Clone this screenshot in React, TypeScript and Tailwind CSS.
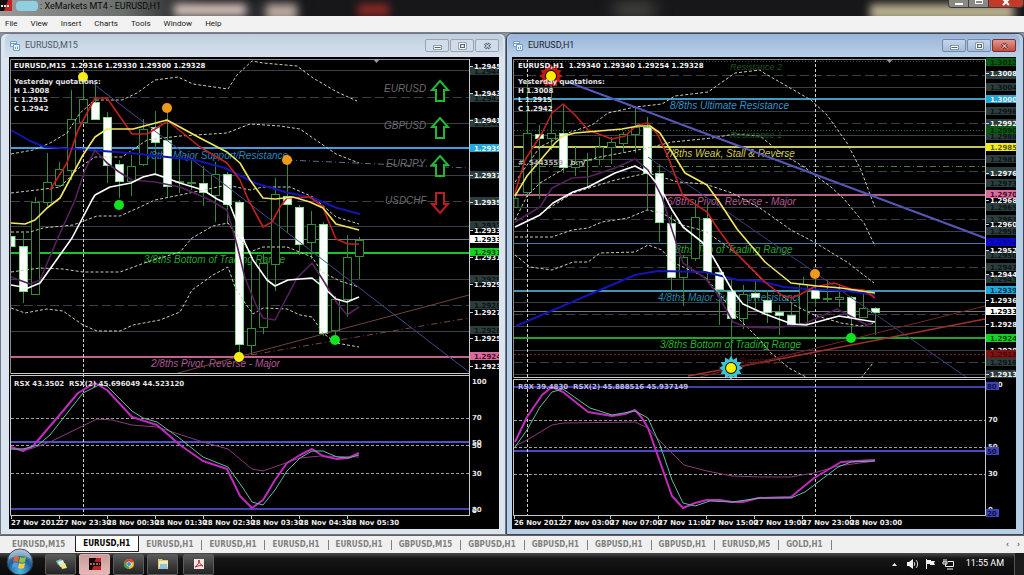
import { ReactNode } from "react";
import clsx from "clsx";

type Candle = [x: number, high: number, low: number, top: number, bottom: number, filled?: number];

type Level = {
  y: number;
  color: string;
  width?: number;
  dash?: string;
};

type Tag = {
  y: number;
  text: string;
  bg?: string;
  color?: string;
  width?: number;
};

type Note = {
  x: number;
  y: number;
  text: string;
  color: string;
};

type Curve = {
  points: string;
  color: string;
  width?: number;
  dash?: string;
};

type ChartProps = {
  title: string;
  left: number;
  right: number;
  axis: number;
  split: number;
  levels: Level[];
  candles: Candle[];
  curves: Curve[];
  verticals: number[];
  tags: Tag[];
  notes: Note[];
  header: Note[];
  dates: string[];
  arrowX: number;
  children?: ReactNode;
};

const GRID = "#3b3f48";
const DASH = "9 4";
const BAND = "3 2";
const SLATE = "#2c3d3d";
const BOLD = 1.6;

const leftLevels: Level[] = [
  { y: 70, color: GRID },
  { y: 97, color: GRID, dash: DASH },
  { y: 123, color: GRID },
  { y: 147, color: "#3f9fe0", width: 2 },
  { y: 175, color: GRID },
  { y: 201, color: GRID, dash: DASH },
  { y: 226, color: GRID },
  { y: 239, color: "#77718c" },
  { y: 252, color: "#19c32b", width: 2 },
  { y: 279, color: GRID },
  { y: 305, color: GRID, dash: DASH },
  { y: 331, color: GRID },
  { y: 356, color: "#c2648c", width: 2 },
  { y: 418, color: "#a0a0a0", dash: BAND },
  { y: 441, color: "#5151c8", width: 2 },
  { y: 445, color: "#a0a0a0", dash: BAND },
  { y: 473, color: "#a0a0a0", dash: BAND },
  { y: 508, color: "#4343b8", width: 2 },
];

const rightLevels: Level[] = [
  { y: 61, color: "#27502a", dash: "1 2" },
  { y: 75, color: GRID, dash: DASH },
  { y: 87, color: GRID },
  { y: 98, color: "#3f9cc0", width: 2 },
  { y: 111, color: GRID },
  { y: 123, color: GRID, dash: DASH },
  { y: 130, color: "#2b6a2b", dash: "1 2" },
  { y: 135, color: GRID },
  { y: 146, color: "#c8c460", width: 2 },
  { y: 159, color: GRID },
  { y: 166, color: "#4e8044", dash: "6 3 1 3" },
  { y: 171, color: GRID, dash: DASH },
  { y: 183, color: GRID },
  { y: 194, color: "#b06086", width: 2 },
  { y: 207, color: GRID },
  { y: 219, color: GRID, dash: DASH },
  { y: 231, color: GRID },
  { y: 243, color: "#3c7fae" },
  { y: 255, color: GRID },
  { y: 267, color: GRID, dash: DASH },
  { y: 279, color: GRID },
  { y: 290, color: "#4694b0", width: 2 },
  { y: 302, color: GRID },
  { y: 311, color: "#777a80" },
  { y: 314, color: GRID, dash: DASH },
  { y: 326, color: GRID },
  { y: 337, color: "#19a828", width: 2 },
  { y: 350, color: GRID },
  { y: 354, color: "#802020", dash: "2 2" },
  { y: 362, color: GRID, dash: DASH },
  { y: 374, color: GRID },
  { y: 386, color: "#3f3fae", width: 2 },
  { y: 420, color: "#a0a0a0", dash: BAND },
  { y: 447, color: "#a0a0a0", dash: BAND },
  { y: 450, color: "#4a4ac4", width: 2 },
  { y: 474, color: "#a0a0a0", dash: BAND },
];

const leftCandles: Candle[] = [
  [11, 236, 246, 236, 246, 1],
  [23, 233, 303, 246, 291, 1],
  [35, 197, 294, 202, 294],
  [47, 153, 206, 182, 202],
  [59, 162, 187, 169, 185],
  [71, 90, 180, 119, 170],
  [83, 78, 122, 99, 122],
  [95, 83, 119, 102, 119, 1],
  [107, 112, 183, 117, 165, 1],
  [119, 160, 198, 164, 181, 1],
  [131, 155, 196, 166, 181],
  [143, 119, 166, 129, 164],
  [155, 111, 174, 127, 142, 1],
  [167, 112, 198, 140, 186, 1],
  [179, 157, 193, 181, 182],
  [191, 160, 190, 182, 183],
  [203, 166, 206, 183, 192, 1],
  [215, 162, 222, 174, 195],
  [227, 172, 224, 174, 204, 1],
  [239, 200, 355, 202, 344, 1],
  [251, 262, 355, 328, 345],
  [263, 253, 334, 263, 327],
  [275, 178, 291, 194, 264],
  [287, 160, 233, 196, 204, 1],
  [299, 205, 255, 207, 244, 1],
  [311, 211, 259, 224, 242],
  [323, 222, 336, 224, 333, 1],
  [335, 296, 338, 299, 330],
  [347, 235, 317, 257, 299],
  [359, 237, 279, 240, 256],
];

const rightCandles: Candle[] = [
  [515, 190, 207, 198, 207],
  [527, 80, 196, 133, 192],
  [539, 125, 199, 134, 138, 1],
  [551, 76, 150, 133, 138],
  [563, 104, 173, 133, 167, 1],
  [575, 147, 176, 161, 167],
  [587, 153, 188, 159, 160],
  [599, 137, 165, 147, 159],
  [611, 137, 164, 142, 147],
  [623, 132, 152, 134, 143],
  [635, 107, 153, 127, 134],
  [647, 117, 210, 127, 173, 1],
  [659, 164, 242, 173, 222, 1],
  [671, 215, 291, 223, 277, 1],
  [683, 255, 306, 257, 277],
  [695, 200, 261, 217, 258],
  [707, 205, 280, 218, 272, 1],
  [719, 270, 325, 272, 289, 1],
  [731, 280, 360, 291, 318, 1],
  [743, 285, 329, 294, 318],
  [755, 280, 310, 293, 297, 1],
  [767, 290, 323, 300, 312, 1],
  [779, 305, 335, 312, 315, 1],
  [791, 304, 325, 315, 324, 1],
  [803, 277, 325, 284, 323],
  [815, 275, 307, 289, 298, 1],
  [827, 280, 302, 298, 299],
  [839, 285, 307, 297, 299],
  [851, 296, 335, 297, 317, 1],
  [863, 294, 318, 308, 317],
  [875, 307, 335, 308, 312, 1],
];

const band = (points: string): Curve => ({ points, color: "#c9cdb0", dash: BAND });

const leftCurves: Curve[] = [
  band("11,154 33,150 50,143 67,133 80,113 95,100 122,100 137,93 155,80 178,77 193,84 228,89 237,75 252,61 263,63 297,66 313,78 337,92 357,101"),
  band("11,193 37,190 60,187 80,167 95,157 122,157 147,140 180,136 227,133 250,124 280,126 300,129 313,138 336,154 359,163"),
  band("11,232 30,232 43,228 73,225 97,216 120,216 140,207 155,200 180,195 204,190 227,185 250,190 263,187 290,187 313,197 336,217 359,224"),
  band("11,272 40,268 63,269 83,272 120,272 147,262 180,252 192,238 213,226 228,223 233,230 250,252 263,247 287,247 312,257 322,272 340,281 359,287"),
  band("11,308 25,313 47,309 63,311 83,325 97,331 120,331 133,325 160,320 180,312 192,290 213,275 228,267 235,287 245,303 253,314 263,308 287,309 300,315 312,317 323,333 336,343 359,347"),
  { points: "78,72 469,372", color: "#47478c" },
  { points: "287,160 469,168", color: "#63668f", dash: "6 3 1 3" },
  { points: "178,373 469,295", color: "#70443c" },
  { points: "239,357 469,318", color: "#7c4444", dash: "6 3 1 3" },
  { points: "11,130 30,141 45,147 75,149 130,153 195,160 225,168 255,183 285,192 313,198 337,208 360,214", color: "#1414b4", width: 2 },
  { points: "11,277 30,284 40,280 57,240 75,200 85,170 95,150 107,163 119,172 132,180 155,182 180,187 210,200 227,210 237,245 245,278 256,305 263,318 275,320 286,299 297,278 312,263 323,280 337,303 347,315 359,307", color: "#57205f", width: BOLD },
  { points: "50,190 67,163 78,130 95,98 107,98 132,134 147,134 168,121 200,147 227,163 240,180 248,199 263,227 272,222 280,207 287,198 310,197 323,207 328,220 336,239 348,244 359,244", color: "#c22020", width: BOLD },
  { points: "11,223 25,224 35,220 47,208 60,198 83,155 95,137 107,129 133,129 167,120 200,138 227,152 240,163 250,180 263,198 275,199 293,197 310,202 323,208 336,224 359,230", color: "#f2e75c", width: BOLD },
  { points: "11,285 28,288 40,283 55,262 72,238 92,200 95,195 110,187 131,183 143,177 155,174 180,183 203,190 217,199 230,205 245,243 253,260 267,280 275,286 288,280 312,278 323,287 336,299 347,302 359,297", color: "#ffffff", width: BOLD },
  { points: "11,449 30,449 50,442 97,419 112,420 132,425 157,427 203,442 228,449 252,469 263,471 280,465 300,458 320,456 359,457", color: "#8b3a80" },
  { points: "11,447 23,451 33,446 57,418 78,393 95,383 107,390 132,417 157,425 180,445 203,461 227,469 240,496 252,508 263,500 275,480 287,463 300,455 312,449 323,456 337,459 348,458 359,453", color: "#c32bc0", width: 2 },
  { points: "11,449 23,449 38,445 50,435 83,393 99,385 107,386 132,411 143,418 157,422 178,437 203,457 228,467 243,488 252,502 263,505 275,490 287,471 300,458 312,451 323,451 337,457 348,458 359,455", color: "#62bca0" },
];

const rightCurves: Curve[] = [
  band("515,182 540,147 568,133 592,125 608,113 635,107 662,104 675,96 708,92 735,73 760,70 764,73 811,100 827,115 847,143 861,170 871,197 875,207"),
  band("515,220 527,196 540,183 572,164 600,157 648,148 672,142 712,138 735,134 760,136 781,153 804,167 831,187 844,199 864,223 875,246"),
  band("540,214 573,193 615,180 648,173 678,182 705,184 732,193 760,208 791,230 814,242 847,262 874,283"),
  band("515,237 552,237 572,230 588,228 602,222 628,218 647,210 662,213 682,225 705,231 725,245 738,255 760,278 794,305 814,315 841,323 861,326 875,323"),
  band("515,255 530,267 552,270 573,262 588,262 600,253 635,252 648,245 662,250 672,262 705,277 722,297 738,318 760,340 771,353 789,368 806,377"),
  band("861,378 873,363"),
  { points: "568,82 985,238", color: "#5656b8", width: 2 },
  { points: "648,157 966,377", color: "#3c3c7c" },
  { points: "688,376 764,362 985,319", color: "#a03030", width: BOLD },
  { points: "700,377 764,361 985,306", color: "#702828" },
  { points: "516,326 635,275 658,271 705,272 738,280 760,281 784,287 807,289 847,291 875,295", color: "#1414b4", width: 2 },
  { points: "515,222 540,207 552,188 572,178 588,177 615,168 635,159 648,170 662,197 672,230 683,263 705,278 718,295 733,322 747,327 774,328 804,324 837,309 854,318 867,325 875,321", color: "#57205f", width: BOLD },
  { points: "515,193 525,160 542,133 552,113 563,104 575,115 588,130 612,139 625,136 637,125 648,123 658,135 668,157 683,196 707,212 718,229 735,252 765,282 781,295 792,298 801,294 814,287 834,283 851,289 864,290 875,298", color: "#c22020", width: BOLD },
  { points: "515,196 527,176 538,163 555,143 563,136 575,133 622,129 638,126 650,126 660,133 685,173 707,185 720,203 737,229 765,262 791,283 817,286 841,288 875,293", color: "#f2e75c", width: BOLD },
  { points: "515,227 540,215 553,203 573,192 588,187 615,173 635,166 648,173 660,187 672,210 683,227 702,242 713,257 732,290 743,304 765,314 792,324 806,325 839,316 875,322", color: "#ffffff", width: BOLD },
  { points: "515,446 527,440 552,425 563,423 635,422 648,428 660,441 672,453 684,465 707,471 732,476 760,477 790,477 814,473 838,466 875,461", color: "#8b3a80" },
  { points: "515,442 527,417 542,395 552,387 563,392 588,412 612,416 625,414 635,410 642,418 648,428 672,496 683,508 695,503 707,500 720,500 732,502 743,502 758,498 791,497 814,478 841,462 857,461 875,460", color: "#c32bc0", width: 2 },
  { points: "515,447 527,430 540,407 552,392 563,389 590,408 612,415 635,411 648,418 660,445 672,480 683,503 695,506 710,501 732,502 760,498 791,498 805,492 838,467 851,462 875,461", color: "#62bca0" },
];

const leftTags: Tag[] = [
  { y: 71, text: "1.2944", bg: SLATE, color: "#0b1414" },
  { y: 98, text: "1.2942", bg: SLATE, color: "#0b1414" },
  { y: 123, text: "1.2940", bg: SLATE, color: "#0b1414" },
  { y: 175, text: "", bg: SLATE },
  { y: 201, text: "", bg: SLATE },
  { y: 225, text: "1.2933", bg: SLATE, color: "#0b1414" },
  { y: 279, text: "1.2929", bg: SLATE, color: "#0b1414" },
  { y: 305, text: "1.2928", bg: SLATE, color: "#0b1414" },
  { y: 330, text: "1.2926", bg: SLATE, color: "#0b1414" },
  { y: 66, text: "1.2945" },
  { y: 93, text: "1.2943" },
  { y: 120, text: "1.2941" },
  { y: 148, text: "1.2939", bg: "#1fa8dc" },
  { y: 175, text: "1.2937" },
  { y: 202, text: "1.2935" },
  { y: 230, text: "1.2933" },
  { y: 257, text: "1.2931" },
  { y: 239, text: "1.2933", bg: "#ffffff", color: "#000000" },
  { y: 252, text: "1.2931", bg: "#12d422", color: "#06480c" },
  { y: 284, text: "1.2929" },
  { y: 312, text: "1.2927" },
  { y: 338, text: "1.2925" },
  { y: 356, text: "1.2924", bg: "#d86a9c", color: "#401028" },
  { y: 366, text: "1.2923" },
];

const rightTags: Tag[] = [
  { y: 62, text: "1.3012", bg: "#0a5a12", color: "#032806" },
  { y: 75, text: "", bg: SLATE },
  { y: 87, text: "1.3004", bg: SLATE, color: "#0b1414" },
  { y: 111, text: "1.2996", bg: SLATE, color: "#0b1414" },
  { y: 123, text: "", bg: SLATE },
  { y: 136, text: "1.2988", bg: SLATE, color: "#0b1414" },
  { y: 130, text: "1.2990", bg: "#0a5a12", color: "#032806" },
  { y: 159, text: "1.2981", bg: SLATE, color: "#0b1414" },
  { y: 171, text: "", bg: SLATE },
  { y: 183, text: "1.2973", bg: SLATE, color: "#0b1414" },
  { y: 207, text: "1.2965", bg: SLATE, color: "#0b1414" },
  { y: 219, text: "1.2961", bg: SLATE, color: "#0b1414" },
  { y: 231, text: "1.2958", bg: SLATE, color: "#0b1414" },
  { y: 255, text: "1.2950", bg: SLATE, color: "#0b1414" },
  { y: 267, text: "1.2947", bg: SLATE, color: "#0b1414" },
  { y: 279, text: "1.2943", bg: SLATE, color: "#0b1414" },
  { y: 362, text: "1.2916", bg: SLATE, color: "#0b1414" },
  { y: 374, text: "", bg: SLATE },
  { y: 73, text: "1.3008" },
  { y: 99, text: "1.3000", bg: "#1fa8dc" },
  { y: 123, text: "1.2992" },
  { y: 147, text: "1.2985", bg: "#f0ec20", color: "#5a5808" },
  { y: 173, text: "1.2976" },
  { y: 200, text: "1.2968" },
  { y: 194, text: "1.2970", bg: "#d86a9c", color: "#401028" },
  { y: 224, text: "1.2960" },
  { y: 242, text: "1.2954", bg: "#0808c8", color: "#06069c" },
  { y: 250, text: "1.2952" },
  { y: 274, text: "1.2944" },
  { y: 290, text: "1.2939", bg: "#1fa8dc", color: "#06384c" },
  { y: 300, text: "1.2936" },
  { y: 311, text: "1.2933", bg: "#ffffff", color: "#000000" },
  { y: 324, text: "1.2928" },
  { y: 338, text: "1.2924", bg: "#12d422", color: "#06480c" },
  { y: 350, text: "1.2920" },
  { y: 354, text: "1.2918", bg: "#7c1414", color: "#4c0808" },
  { y: 374, text: "1.2913" },
  { y: 386, text: "80", bg: "#3c46b4", color: "#10104c", width: 13 },
  { y: 451, text: "50", bg: "#3c46b4", color: "#10104c", width: 13 },
  { y: 513, text: "20", bg: "#3c46b4", color: "#10104c", width: 13 },
];

const leftNotes: Note[] = [
  { x: 143, y: 159, text: "4/8ths Major Support/Resistance", color: "#2788c0" },
  { x: 144, y: 263, text: "3/8ths Bottom of Trading Range", color: "#2aa32e" },
  { x: 151, y: 367, text: "2/8ths Pivot, Reverse - Major", color: "#b05896" },
  { x: 384, y: 92, text: "EURUSD", color: "#6c6c6c" },
  { x: 384, y: 129, text: "GBPUSD", color: "#6c6c6c" },
  { x: 386, y: 167, text: "EURJPY", color: "#6c6c6c" },
  { x: 385, y: 204, text: "USDCHF", color: "#6c6c6c" },
];

const rightNotes: Note[] = [
  { x: 670, y: 109, text: "8/8ths Ultimate Resistance", color: "#2e97cf" },
  { x: 665, y: 157, text: "7/8ths Weak, Stall & Reverse", color: "#d2cb4a" },
  { x: 667, y: 205, text: "6/8ths Pivot, Reverse - Major", color: "#b55a92" },
  { x: 667, y: 253, text: "5/8ths Top of Trading Range", color: "#2aa32e" },
  { x: 658, y: 301, text: "4/8ths Major Support/Resistance", color: "#2788a8" },
  { x: 660, y: 348, text: "3/8ths Bottom of Trading Range", color: "#2ab02e" },
];

const leftHeader: Note[] = [
  { x: 14, y: 68, text: "EURUSD,M15  1.29316 1.29330 1.29300 1.29328", color: "#f0f0f0" },
  { x: 14, y: 84, text: "Yesterday quotations:", color: "#e4e4e4" },
  { x: 14, y: 93, text: "H 1.3008", color: "#e4e4e4" },
  { x: 14, y: 102, text: "L 1.2915", color: "#e4e4e4" },
  { x: 14, y: 111, text: "C 1.2942", color: "#e4e4e4" },
  { x: 14, y: 386, text: "RSX 43.3502  RSX(2) 45.696049 44.523120", color: "#e4e4e4" },
  { x: 472, y: 384, text: "100", color: "#e4e4e4" },
  { x: 472, y: 420, text: "70", color: "#e4e4e4" },
  { x: 472, y: 445, text: "50", color: "#e4e4e4" },
  { x: 472, y: 448, text: "50", color: "#e4e4e4" },
  { x: 472, y: 476, text: "30", color: "#e4e4e4" },
  { x: 472, y: 512, text: "20", color: "#e4e4e4" },
  { x: 472, y: 513, text: "0", color: "#e4e4e4" },
];

const rightHeader: Note[] = [
  { x: 518, y: 68, text: "EURUSD,H1  1.29340 1.29340 1.29254 1.29328", color: "#f0f0f0" },
  { x: 518, y: 84, text: "Yesterday quotations:", color: "#e4e4e4" },
  { x: 518, y: 93, text: "H 1.3008", color: "#e4e4e4" },
  { x: 518, y: 102, text: "L 1.2915", color: "#e4e4e4" },
  { x: 518, y: 111, text: "C 1.2942", color: "#e4e4e4" },
  { x: 518, y: 165, text: "#. 5443559 . b. y", color: "#b8b8b8" },
  { x: 518, y: 389, text: "RSX 39.4830  RSX(2) 45.888516 45.937149", color: "#b8b8e0" },
  { x: 988, y: 387, text: "100", color: "#e4e4e4" },
  { x: 988, y: 422, text: "70", color: "#e4e4e4" },
  { x: 988, y: 449, text: "50", color: "#e4e4e4" },
  { x: 988, y: 476, text: "30", color: "#e4e4e4" },
  { x: 988, y: 512, text: "0", color: "#e4e4e4" },
];

const leftDates = [
  "27 Nov 2012",
  "27 Nov 23:30",
  "28 Nov 00:30",
  "28 Nov 01:30",
  "28 Nov 02:30",
  "28 Nov 03:30",
  "28 Nov 04:30",
  "28 Nov 05:30",
];

const rightDates = [
  "26 Nov 2012",
  "27 Nov 03:00",
  "27 Nov 07:00",
  "27 Nov 11:00",
  "27 Nov 15:00",
  "27 Nov 19:00",
  "27 Nov 23:00",
  "28 Nov 03:00",
];

const menus = ["File", "View", "Insert", "Charts", "Tools", "Window", "Help"];

const tabs = [
  "EURUSD,M15",
  "EURUSD,H1",
  "EURUSD,H1",
  "EURUSD,H1",
  "EURUSD,H1",
  "EURUSD,H1",
  "GBPUSD,M15",
  "GBPUSD,H1",
  "GBPUSD,H1",
  "GBPUSD,H1",
  "GBPUSD,H1",
  "EURUSD,M5",
  "GOLD,H1",
];

const Chart = ({
  title,
  left,
  right,
  axis,
  split,
  levels,
  candles,
  curves,
  verticals,
  tags,
  notes,
  header,
  dates,
  arrowX,
  children,
}: ChartProps) => {
  const start = left + 2;

  return (
    <svg
      className="block h-auto w-full bg-black"
      viewBox={`${left} 57 ${right - left} 472`}
      role="img"
      aria-label={title}
    >
      {levels.map(({ y, color, width = 1, dash }, i) => (
        <line
          key={i}
          x1={start}
          x2={axis}
          y1={y + width / 2}
          y2={y + width / 2}
          stroke={color}
          strokeWidth={width}
          strokeDasharray={dash}
        />
      ))}
      <g className="font-['Liberation_Sans',sans-serif] text-[10px] italic">
        {notes.map(({ x, y, text, color }) => (
          <text key={text} x={x} y={y} fill={color}>
            {text}
          </text>
        ))}
      </g>
      {verticals.map((x) => (
        <line key={x} x1={x + 0.5} x2={x + 0.5} y1={59} y2={515} stroke="#d0d0d0" strokeDasharray="3 2" />
      ))}
      {candles.map(([x, high, low, top, bottom, filled]) => (
        <g key={x} stroke={filled ? "#7ce08a" : "#338c3a"}>
          <line x1={x + 0.5} x2={x + 0.5} y1={high} y2={low} stroke="#338c3a" />
          <rect
            x={Math.max(x - 3.5, start)}
            y={top + 0.5}
            width={x - 3.5 < start ? 4 : 8}
            height={bottom - top}
            fill={filled ? "#ffffff" : "#000000"}
          />
        </g>
      ))}
      {curves.map(({ points, color, width = 1, dash }, i) => (
        <polyline
          key={i}
          points={points}
          fill="none"
          stroke={color}
          strokeWidth={width}
          strokeDasharray={dash}
          strokeLinejoin="round"
        />
      ))}
      {children}

      {/* pane frames */}
      <g stroke="#c8c8c8" fill="none">
        <path d={`M${start - 0.5} ${split}V59.5H${axis}`} stroke="#8c8c8c" />
        <path d={`M${start - 0.5} ${split + 0.5}H${axis}M${axis + 0.5} 59V516`} />
        <path d={`M${axis} ${split + 2.5}H${start - 0.5}V515.5H${axis}`} />
        {dates.map((date, i) => (
          <path key={date} d={`M${start + i * 48 + 0.5} 516v3`} />
        ))}
      </g>
      <path d={`M${arrowX} 59h7l-3.500 4z`} fill="#9a9a9a" />

      <g className="font-['DejaVu_Sans',sans-serif] text-[7px] font-bold">
        {header.map(({ x, y, text, color }, i) => (
          <text key={i} x={x} y={y} fill={color} className="whitespace-pre">
            {text}
          </text>
        ))}
        {tags.map(({ y, text, bg, color = "#f0f0f0", width }, i) => (
          <g key={i}>
            {bg && <rect x={axis + 1} y={y - 4} width={width ?? right - axis} height="8" fill={bg} />}
            {!bg && <path d={`M${axis + 1} ${y + 0.5}h3`} stroke="#d0d0d0" />}
            <text x={width ? axis + 2 : axis + 5} y={y + 3} fill={color}>
              {text}
            </text>
          </g>
        ))}
        {dates.map((date, i) => (
          <text key={date} x={start + i * 48} y="525" fill="#ececec">
            {date}
          </text>
        ))}
      </g>
    </svg>
  );
};

const Arrow = ({ x, y, down }: { x: number; y: number; down?: boolean }) => (
  <path
    d={down ? "M-4 0h8v11h4l-8 9l-8 -9h4z" : "M0 0l8 9h-4v11h-8v-11h-4z"}
    transform={`translate(${x} ${y})`}
    fill="#000000"
    stroke={down ? "#b81c24" : "#22b836"}
    strokeWidth="2"
  />
);

const Sun = ({ x, y, color }: { x: number; y: number; color: string }) => (
  <g transform={`translate(${x} ${y})`}>
    {Array.from({ length: 12 }, (_, i) => (
      <path key={i} d="M-3 -7L0 -12L3 -7z" fill={color} transform={`rotate(${i * 30})`} />
    ))}
    <circle r="7" fill="#101000" stroke={color} strokeWidth="2" />
    <circle r="5" fill="#ffee00" />
  </g>
);

const ChartIcon = () => (
  <svg className="size-3" viewBox="0 0 12 12" fill="#eaf3fb" stroke="#6f9cc8">
    <path d="M1.500 1.500h6v5h-6zM1.500 3.500h6" />
    <path d="M4.500 4.500h6v6h-6z" />
    <path d="M6.500 9v-2M8.500 9V6.500" />
  </svg>
);

const controlPaths = [
  { label: "Minimize", path: "M3 6.500h7v2h-7z" },
  { label: "Restore", path: "M3.500 3.500h6v5h-6zM5.500 5.500h2v1h-2z" },
  { label: "Close", path: "M4 3.500l5 5M9 3.500l-5 5" },
];

const WindowControls = ({ active }: { active?: boolean }) => (
  <div className="flex gap-px">
    {controlPaths.map(({ label, path }, i) => {
      const close = active && i === 2;
      return (
        <button
          key={label}
          aria-label={label}
          className={clsx(
            "flex h-[13px] w-6 items-center justify-center rounded-xs border",
            close
              ? "border-[#7a3030] bg-linear-to-b from-[#e09a90] to-[#c04a3c]"
              : active
                ? "border-[#7489a8] bg-linear-to-b from-[#c4d6ec] to-[#a3bcda]"
                : "border-[#98a4b4] bg-[#d0dce9]"
          )}
        >
          <svg className="h-3 w-[13px]" viewBox="0 0 13 12" fill="none">
            <path d={path} stroke={close ? "#803028" : "#5a6676"} strokeWidth={i === 2 ? 3 : 2} />
            <path d={path} stroke="#ffffff" />
          </svg>
        </button>
      );
    })}
  </div>
);

const ChartWindow = ({ title, active, children }: { title: string; active?: boolean; children: ReactNode }) => (
  <section
    className={clsx(
      "min-w-0 rounded-t-md border pb-[5px]",
      active
        ? "flex-[504] border-[#3c4656] bg-[#b5cfe6] pr-[7px] pl-[5px]"
        : "flex-[490] border-[#6c7684] bg-[#dae5ef] pr-1.5 pl-2"
    )}
  >
    <header
      className={clsx(
        "-mr-1 -ml-1 flex h-[23px] items-center justify-between rounded-t-md bg-linear-to-b pr-1 pl-1",
        active ? "from-[#9bb5d8] to-[#b9d0e9]" : "from-[#c0cfdf] to-[#d5e0ec]"
      )}
    >
      <h2
        className={clsx(
          "flex items-center gap-1 font-['Roboto',sans-serif] text-[9px]",
          active ? "text-[#1c2430]" : "text-[#4c5866]"
        )}
      >
        <ChartIcon />
        {title}
      </h2>
      <WindowControls active={active} />
    </header>
    {children}
  </section>
);

const taskIcons = [
  {
    label: "Sticky Notes",
    icon: (
      <>
        <path d="M1 3l5 -2l2 4l-5 2z" fill="#7cc8a0" />
        <path d="M3 4l5 -2l2 5l-5 2z" fill="#d8eef0" />
        <path d="M5 6l5 -1l2 5l-5 1z" fill="#f2e68a" />
      </>
    ),
  },
  {
    label: "XeMarkets",
    icon: (
      <>
        <path d="M0 0h12v12h-12z" fill="#160808" />
        <path d="M7 0h5v12h-9z" fill="#c02020" />
        <path d="M0 4h12v4h-12z" fill="#160808" />
        <path d="M1 6h10" stroke="#e8e8e8" strokeDasharray="2 1" />
      </>
    ),
  },
  {
    label: "Chrome",
    icon: (
      <>
        <circle cx="6" cy="6" r="5" fill="#e8c22c" />
        <path d="M6 6L1.700 3.500A5 5 0 0 1 10.300 3.500z" fill="#d8402c" />
        <path d="M6 6L1.700 3.500A5 5 0 0 0 6 11z" fill="#3ca04a" />
        <circle cx="6" cy="6" r="2.500" fill="#f4f4f4" />
        <circle cx="6" cy="6" r="2" fill="#4a86d8" />
      </>
    ),
  },
  {
    label: "Explorer",
    icon: (
      <>
        <path d="M1 1h4l1 1h5v9H1z" fill="#d9c878" />
        <path d="M2 3h9v6H2z" fill="#f2ebb8" />
        <path d="M3 6h7v5H3z" fill="#8cc0dc" />
      </>
    ),
  },
  {
    label: "Adobe Reader",
    icon: (
      <>
        <path d="M1 1h10v10H1z" fill="#f0e8e8" />
        <path d="M6 2c0 3 2 5 4 6c-3 -1 -5 0 -8 1c3 -2 4 -4 4 -7z" fill="none" stroke="#b82a2a" />
      </>
    ),
  },
];

const TitleBar = () => (
  <header className="relative flex h-4 items-start justify-between overflow-hidden bg-[#17171a]">
    <div className="absolute inset-0 bg-linear-to-r from-[#9a9a9a] from-0% via-[#6a6e6a] via-12% to-[#17171a] to-20%" />
    <div className="absolute top-1 left-[17%] h-4 w-[12%] bg-[#343438] blur-sm" />
    <div className="absolute top-1 left-[17%] h-3 w-[7%] bg-[#d8c4bc] blur-xs" />
    <div className="absolute top-1 left-[26%] h-4 w-[3%] bg-[#b8a8a0] blur-xs" />
    <div className="absolute top-1 left-[35%] h-3 w-[3%] bg-[#8c2a26] blur-xs" />
    <div className="absolute top-1 left-[60%] h-3 w-[4%] bg-[#54544c] blur-sm" />
    <div className="absolute top-1 right-[1%] h-4 w-[14%] bg-[#b8b090] blur-xs" />
    <h1 className="relative flex items-center font-['Roboto',sans-serif] text-[9px] leading-[10px] text-[#08080a]">
      <svg className="h-[11px] w-3" viewBox="0 0 12 11">
        <path d="M0 0h12v11H0z" fill="#141010" />
        <path d="M8 0h4v11H4z" fill="#c42424" />
        <path d="M1 6h9" stroke="#e8e8e8" strokeWidth="2" strokeDasharray="2 1" />
      </svg>
      <span className="mr-0.5 ml-1 h-2.5 w-[22px] rounded-sm bg-[#8fd0e0]" />
      : XeMarkets MT4 - EURUSD,H1
    </h1>
    <div className="relative flex h-2 overflow-hidden rounded-b-sm border border-t-0 border-[#3a3a3a]">
      <button aria-label="Minimize window" className="flex h-2 w-5 items-center justify-center border-r border-[#3a3a3a] bg-[#8a8a84]">
        <span className="h-0.5 w-2 bg-white" />
      </button>
      <button aria-label="Restore window" className="flex h-2 w-5 items-start justify-center border-r border-[#3a3a3a] bg-[#8a8a84]">
        <span className="h-1 w-2 border border-white" />
      </button>
      <button aria-label="Close window" className="flex h-2 w-[34px] items-start justify-center bg-[#c23a28]">
        <svg className="h-1.5 w-2" viewBox="0 0 8 6">
          <path d="M1 -1l6 6M7 -1l-6 6" stroke="#ffffff" strokeWidth="2" />
        </svg>
      </button>
    </div>
  </header>
);

const Taskbar = () => (
  <footer className="flex h-[22px] items-center justify-between bg-linear-to-b from-[#4a4a4a] via-[#161616] via-25% to-[#0a0a0a]">
    <div className="flex items-center">
      <button aria-label="Start" className="-mt-1 mr-[11px] ml-1.5 size-7">
        <svg viewBox="0 0 28 28">
          <defs>
            <radialGradient id="orb" cx="50%" cy="85%" r="80%">
              <stop offset="0" stopColor="#4fb8e8" />
              <stop offset="0.600" stopColor="#1f5c94" />
              <stop offset="1" stopColor="#8aa8c0" />
            </radialGradient>
          </defs>
          <circle cx="14" cy="14" r="13" fill="url(#orb)" stroke="#26384a" />
          <path d="M8 9c2 -1 4 -1 5 0l-1 5c-2 -1 -4 -1 -5 0z" fill="#e8622c" />
          <path d="M14 9c2 1 4 1 6 0l-1 5c-2 1 -4 1 -6 0z" fill="#8cc43c" />
          <path d="M7 15c2 -1 3 -1 5 0l-1 5c-2 -1 -3 -1 -5 0z" fill="#4aa0e0" />
          <path d="M13 15c2 1 4 1 6 0l-1 5c-2 1 -4 1 -6 0z" fill="#f6cc3c" />
          <path d="M3 11a11 10 0 0 1 22 0c-6 -4 -16 -4 -22 0z" fill="#ffffff" opacity="0.300" />
        </svg>
      </button>
      <div className="flex gap-[3px]">
        {taskIcons.map(({ label, icon }, i) => (
          <button
            key={label}
            aria-label={label}
            className={clsx(
              "flex h-[21px] w-[31px] items-center justify-center rounded-xs border last:ml-0.5",
              i === 1
                ? "border-[#d8b0b0] bg-linear-to-b from-[#c89c9c] to-[#e8b8b8]"
                : "border-[#5c5c5c] bg-linear-to-b from-[#5a5a5a] to-[#242424]"
            )}
          >
            <svg className="size-3" viewBox="0 0 12 12">
              {icon}
            </svg>
          </button>
        ))}
      </div>
    </div>
    <div className="flex h-full items-center gap-2.5 text-white">
      <svg className="h-3 w-16" viewBox="0 0 64 12" fill="#f0f0f0">
        <path d="M0 8h5l-2.500 -3z" />
        <path d="M15 4h2l4 -3v10l-4 -3h-2z" />
        <path d="M22 4c1 1 1 3 0 4M24 2c2 2 2 6 0 8" fill="none" stroke="#e0e0e0" />
        <path d="M34 1h1v10h-1zM35 2h4v1h4l-1 2l1 2h-5v-1h-3z" />
        <path d="M55.500 3.500h6v5h-8v-3M52 1v3M54 1v3M51 4h4v2h-4zM55 11h6" fill="none" stroke="#f0f0f0" />
      </svg>
      <time className="font-['Roboto',sans-serif] text-[9px]">11:55 AM</time>
      <span className="h-full w-2.5 border-l border-[#555555] bg-[#1c1c1c]" />
    </div>
  </footer>
);

const App = () => (
  <div className="w-full overflow-hidden bg-[#8c949e]">
    <TitleBar />
    <nav className="flex h-[17px] items-center gap-[13px] border-b border-[#7c8088] bg-[#f2f2f2] pl-[5px] font-['Roboto',sans-serif] text-[8px] text-[#1a1a1a]">
      {menus.map((menu) => (
        <button key={menu}>{menu}</button>
      ))}
    </nav>

    <main className="flex items-start">
      <ChartWindow title="EURUSD,M15">
        <Chart
          title="EURUSD,M15"
          left={9}
          right={499}
          axis={469}
          split={373}
          levels={leftLevels}
          candles={leftCandles}
          curves={leftCurves}
          verticals={[83]}
          tags={leftTags}
          notes={leftNotes}
          header={leftHeader}
          dates={leftDates}
          arrowX={373}
        >
          <circle cx="83" cy="77" r="5" fill="#f8ee10" />
          <circle cx="167" cy="108" r="5" fill="#f09a1c" />
          <circle cx="287" cy="160" r="5" fill="#f09a1c" />
          <circle cx="119" cy="205" r="5" fill="#10e41c" />
          <circle cx="239" cy="357" r="5" fill="#f8ee10" />
          <circle cx="335" cy="340" r="5" fill="#10e41c" />
          <Arrow x={440} y={81} />
          <Arrow x={440} y={118} />
          <Arrow x={440} y={156} />
          <Arrow x={440} y={193} down />
        </Chart>
      </ChartWindow>

      <ChartWindow title="EURUSD,H1" active>
        <Chart
          title="EURUSD,H1"
          left={512}
          right={1016}
          axis={985}
          split={377}
          levels={rightLevels}
          candles={rightCandles}
          curves={rightCurves}
          verticals={[527, 815]}
          tags={rightTags}
          notes={rightNotes}
          header={rightHeader}
          dates={rightDates}
          arrowX={886}
        >
          <g className="font-['Liberation_Sans',sans-serif] text-[9px] italic">
            <text x="730" y="70" fill="#1d5220">Resistance 2</text>
            <text x="730" y="138" fill="#1d5220">Resistance 1</text>
            <text x="738" y="364" fill="#5c1414">Support 1</text>
          </g>
          <circle cx="815" cy="274" r="5" fill="#f09a1c" />
          <circle cx="851" cy="338" r="5" fill="#10e41c" />
          <Sun x={551} y={76} color="#c01c14" />
          <Sun x={731} y={368} color="#3cc4dc" />
        </Chart>
      </ChartWindow>
    </main>

    <div className="flex h-[18px] items-stretch justify-between border-t border-[#6a5c58] bg-[#f0f0f0] font-['DejaVu_Sans_Condensed','DejaVu_Sans',sans-serif] text-[8px] font-bold">
      <div role="tablist" className="flex items-center pl-[5px]">
        {tabs.map((tab, i) => (
          <button
            key={i}
            role="tab"
            aria-selected={i === 1}
            className={clsx(
              "pl-[7px] whitespace-nowrap",
              i === 0 && "pr-2.5 text-[#808080]",
              i === 1 && "h-4 self-start border border-t-0 border-[#202020] bg-white pr-2 text-black",
              i > 1 && "border-r border-[#808080] pr-2 leading-[10px] text-[#808080]"
            )}
          >
            {tab}
          </button>
        ))}
      </div>
      <div className="flex items-center gap-2 pr-1 text-[#606060]">
        <button aria-label="Previous tab">‹</button>
        <button aria-label="Next tab">›</button>
      </div>
    </div>
    <Taskbar />
  </div>
);

export default App;
